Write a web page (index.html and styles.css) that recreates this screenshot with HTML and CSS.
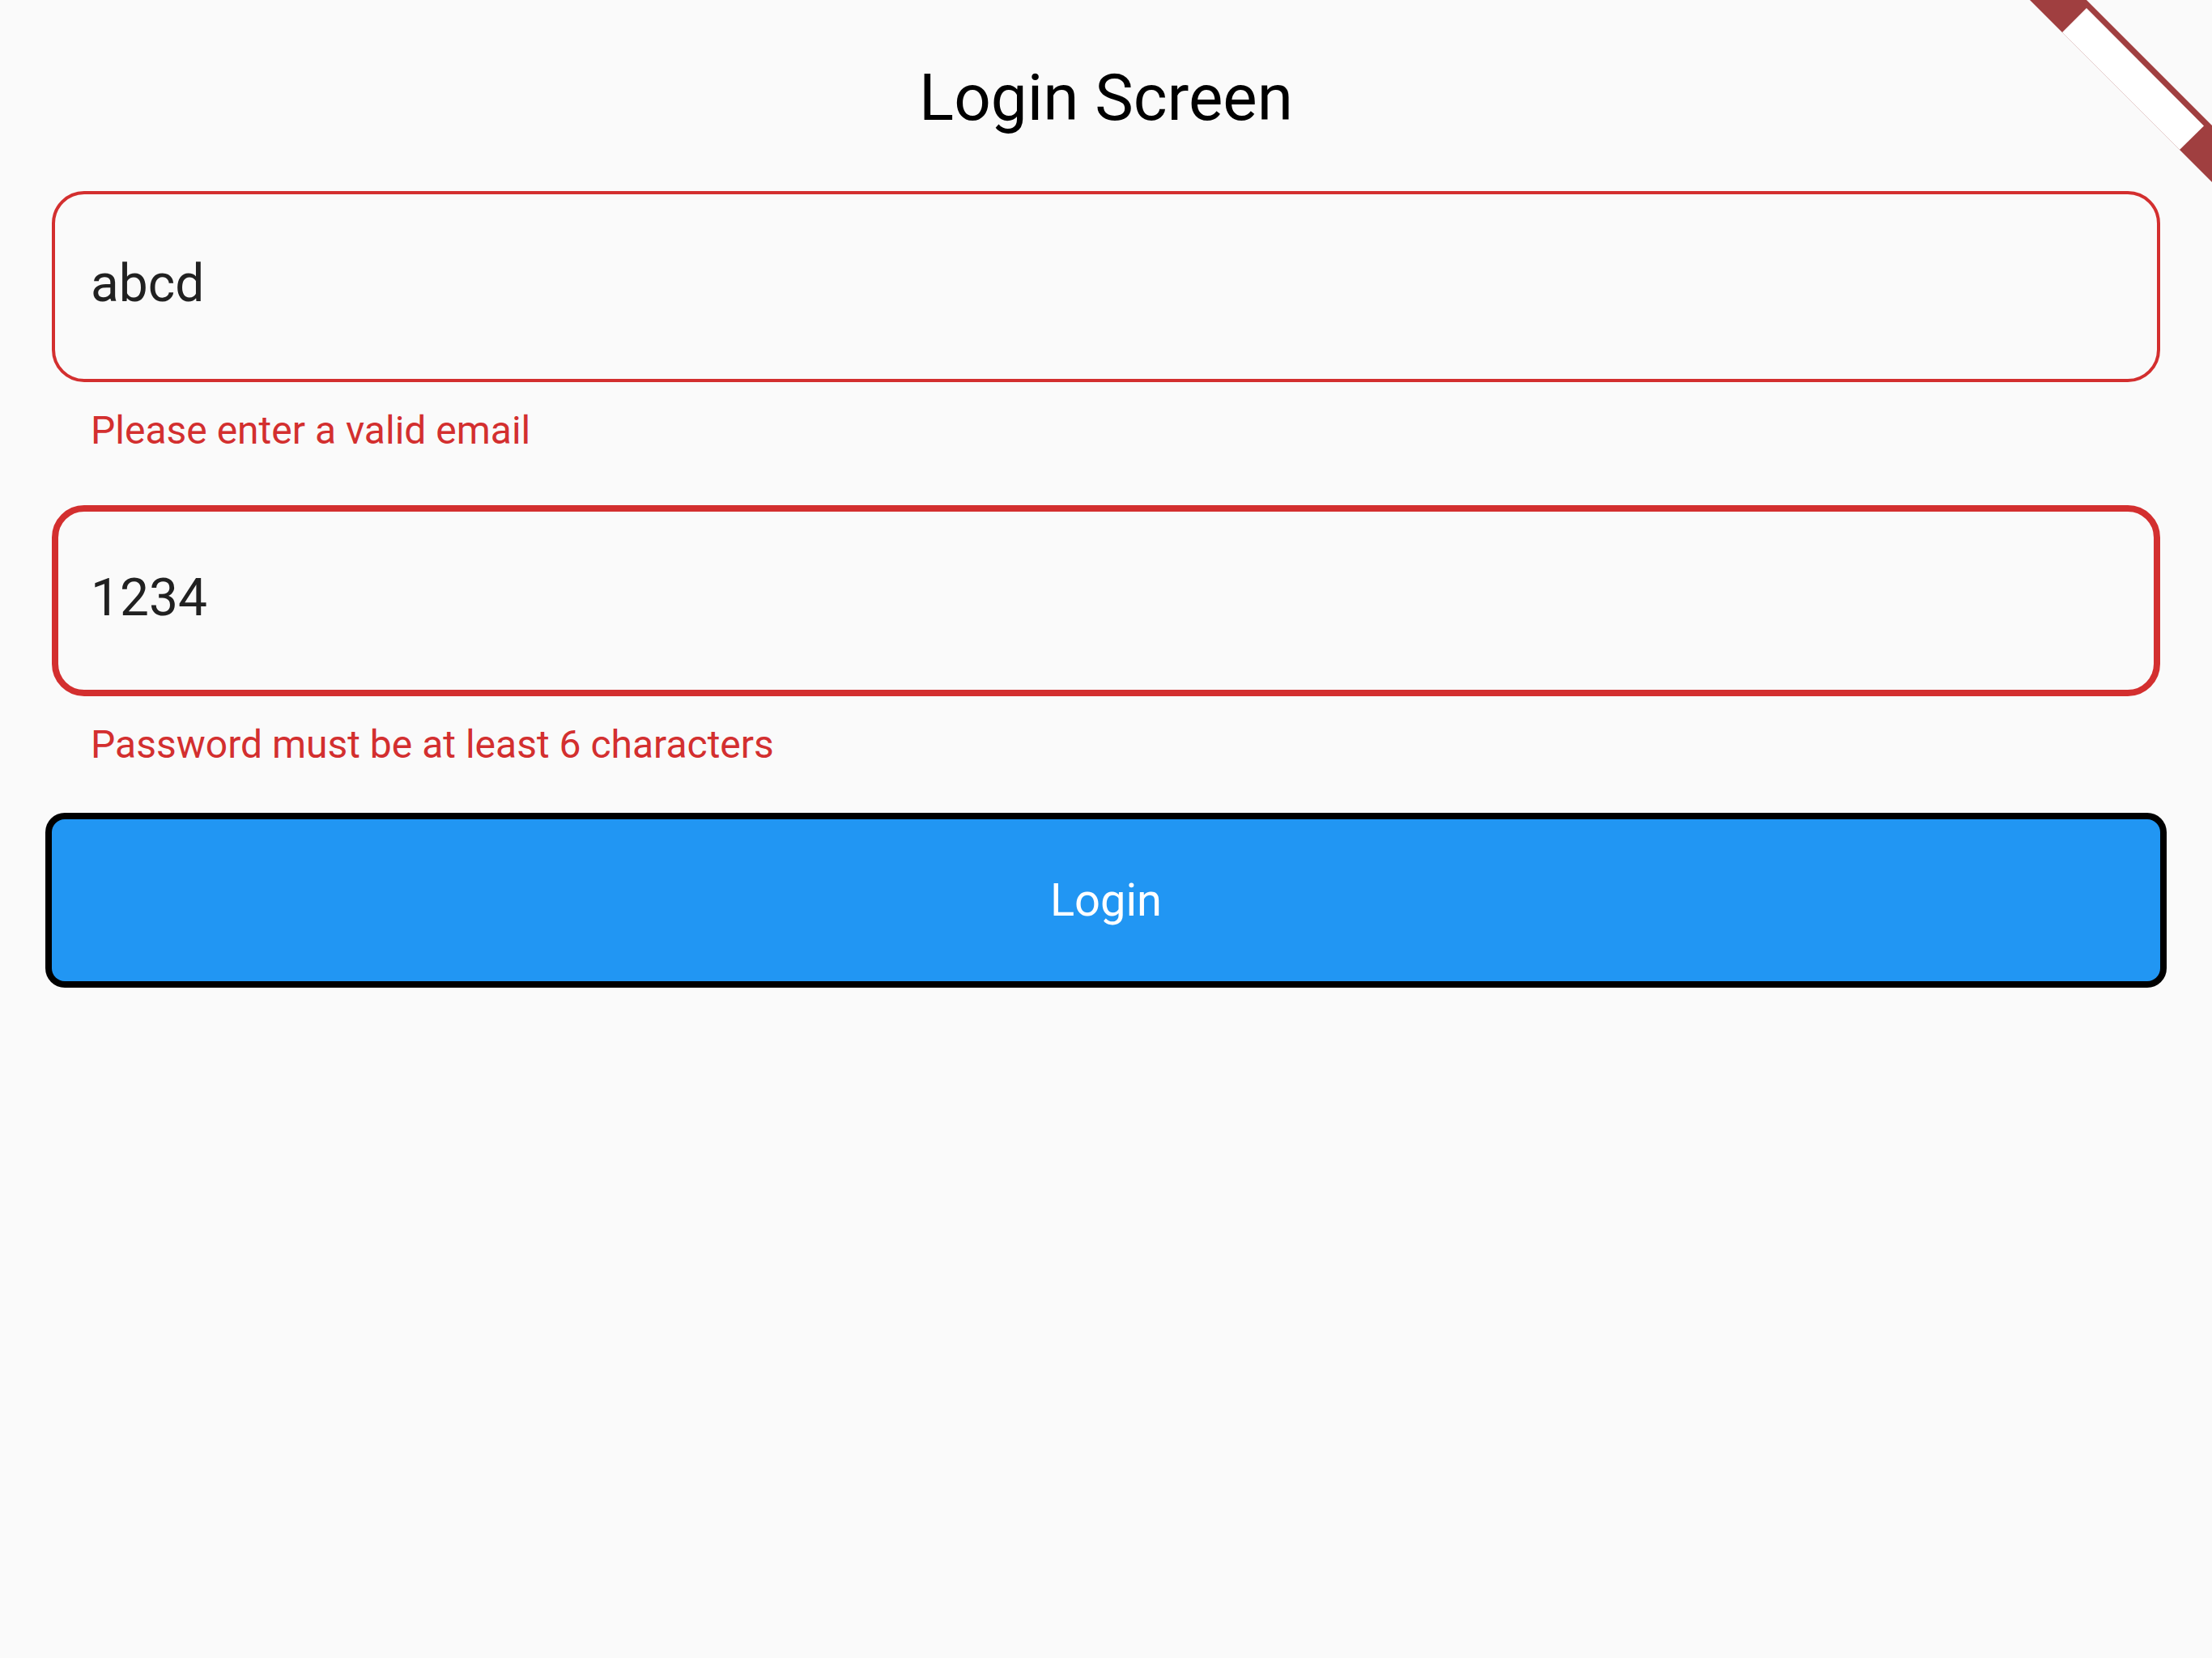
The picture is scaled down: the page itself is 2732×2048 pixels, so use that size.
FILE: index.html
```html
<!DOCTYPE html>
<html lang="en">
<head>
<meta charset="utf-8">
<title>Login Screen</title>
<link rel="stylesheet" href="styles.css">
</head>
<body>
<div class="screen">
  <header class="header">
    <h1 class="title">Login Screen</h1>
  </header>
  <main class="form">
    <div class="field field-email">
      <span class="field-value">abcd</span>
    </div>
    <div class="error">Please enter a valid email</div>
    <div class="field field-password">
      <span class="field-value">1234</span>
    </div>
    <div class="error">Password must be at least 6 characters</div>
    <button class="login-btn" type="button">Login</button>
  </main>
  <svg class="banner" width="232" height="232" viewBox="0 0 232 232" aria-hidden="true">
    <polygon points="7,0 77,0 232,155 232,225" fill="#a03f40"/>
    <polygon points="77,10 47,40 192,185 222,155.5" fill="#ffffff"/>
  </svg>
</div>
</body>
</html>
```
FILE: styles.css
```css
html, body {
  margin: 0;
  padding: 0;
  background: #fafafa;
}

body {
  width: 2732px;
  height: 2048px;
  overflow: hidden;
  font-family: Roboto, "Liberation Sans", sans-serif;
}

.screen {
  position: relative;
  width: 100%;
  height: 100%;
}

.header {
  padding-top: 73px;
  margin-bottom: 67px;
  display: flex;
  justify-content: center;
}

.title {
  margin: 0;
  font-size: 80px;
  line-height: 96px;
  font-weight: 400;
  color: #000000;
}

.form {
  display: flex;
  flex-direction: column;
  padding: 0 64px;
}

.field {
  box-sizing: border-box;
  height: 236px;
  border-style: solid;
  border-color: #d32f2f;
  border-radius: 40px;
  font-size: 64px;
  line-height: 76px;
  color: #212121;
}

.field-email {
  border-width: 4px;
  padding: 73px 44px 0;
}

.field-password {
  border-width: 8px;
  padding: 69px 40px 0;
}

.field-value {
  display: block;
}

.error {
  margin: 32px 0 64px;
  padding-left: 48px;
  font-size: 48px;
  line-height: 56px;
  color: #d32f2f;
}

.login-btn {
  box-sizing: border-box;
  height: 200px;
  width: 100%;
  margin: 0;
  border: none;
  border-radius: 16px;
  background: #2196f3;
  box-shadow: 0 0 0 8px #000000;
  color: #ffffff;
  font-family: Roboto, "Liberation Sans", sans-serif;
  font-size: 56px;
  font-weight: 400;
  display: flex;
  align-items: center;
  justify-content: center;
  padding: 0;
}

.banner {
  position: absolute;
  top: 0;
  right: 0;
}
```
